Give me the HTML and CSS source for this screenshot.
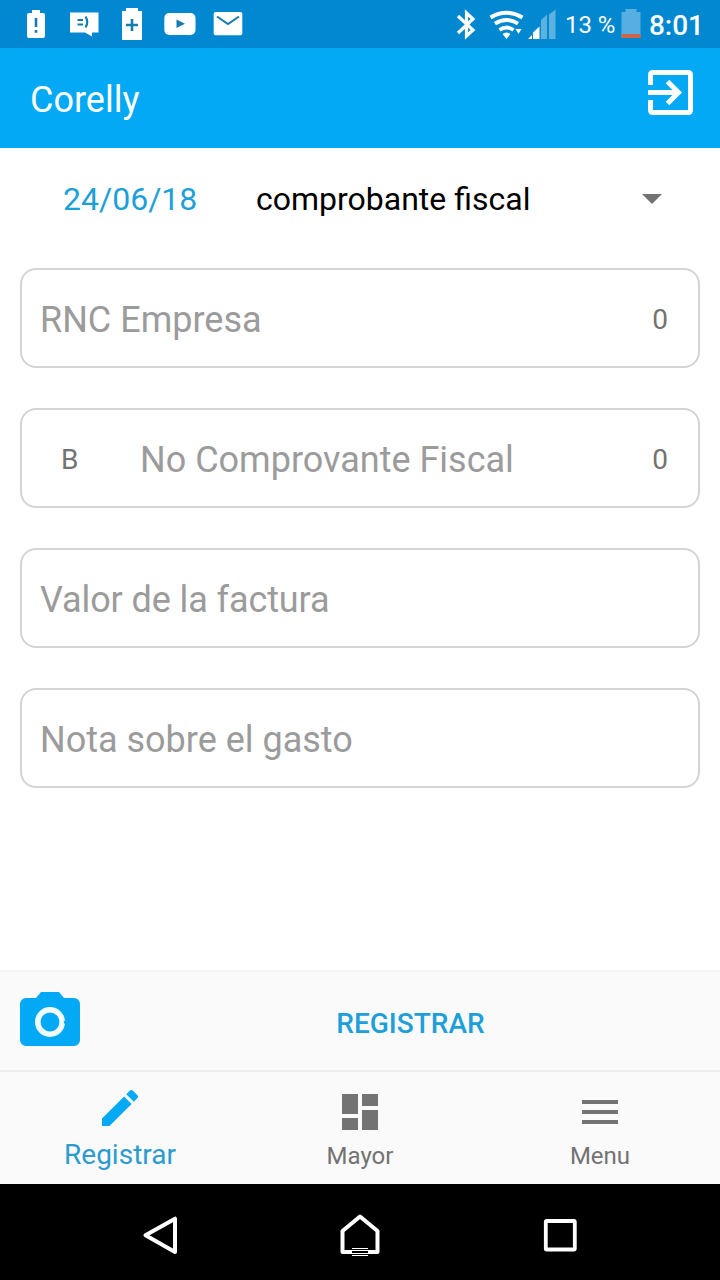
FILE: index.html
```html
<!DOCTYPE html>
<html lang="es">
<head>
<meta charset="utf-8">
<title>Corelly</title>
<link rel="stylesheet" href="styles.css">
</head>
<body>
<div class="screen">
  <div class="status">
    <div class="notifications">
      <svg class="cell" viewBox="0 0 48 48"><path fill="#fff" d="M20 10h8v3h3a2 2 0 0 1 2 2v21a2 2 0 0 1-2 2H17a2 2 0 0 1-2-2V15a2 2 0 0 1 2-2h3z"/><path stroke="#147cae" stroke-width="2.600" d="M24 18v9M24 30v2.800"/></svg>
      <svg class="cell" viewBox="0 0 48 48"><path fill="#fff" d="M10 12.500h28.500v20H32v4l-7-4H10z"/><path fill="none" stroke="#147cae" stroke-width="2.200" d="M17.500 20h5.500M17.500 24.500h5.500M25.500 16.500q3.500 5.500 0 11"/></svg>
      <svg class="cell" viewBox="0 0 48 48"><path fill="#fff" d="M18 8h12v3h4v29H14V11h4z"/><path stroke="#147cae" stroke-width="2.600" d="M18 25h12M24 19v12"/></svg>
      <svg class="cell" viewBox="0 0 48 48"><rect x="8.300" y="13" width="31.200" height="22" rx="5" fill="#fff"/><path fill="#147cae" d="M20.500 19.500v8.500l8.500-4.250z"/></svg>
      <svg class="cell" viewBox="0 0 48 48"><rect x="9.700" y="12" width="28.600" height="23.300" rx="2" fill="#fff"/><path fill="none" stroke="#147cae" stroke-width="2" d="M13 16.500l11 7.500 11-7.500"/></svg>
    </div>
    <div class="system">
      <svg class="radio" viewBox="456 0 102 48">
        <path fill="none" stroke="#fff" stroke-width="3.200" d="M458 16l15 14-6.500 6V13l6.500 6-15 14"/>
        <g fill="none" stroke="#fff" stroke-width="3.800"><path d="M490.500 17.500q16-9.500 32 0M495 23.700q11.500-7.500 23 0M499.500 30q7-5 14 0"/></g>
        <path fill="#fff" d="M502.500 34q4-3 8 0l-4 5zM515.500 29h6l-3 5z"/>
        <path fill="#5bb2e0" d="M541 20l6-5.500V39h-6zM549 14.500l6.500-5V39H549z"/>
        <path fill="#fff" d="M533 32.500l6.500-6V39H533zM528 39l4-4v4z"/>
      </svg>
      <span class="percent">13 %</span>
      <svg class="battery" viewBox="620 0 22 48"><path fill="#57aee0" d="M621.500 12h4V9h11v3h4v26h-19z"/><path fill="#cf634c" d="M621.500 34h19v4h-19z"/></svg>
      <span class="clock">8:01</span>
    </div>
  </div>
  <header class="appbar">
    <h1 class="title">Corelly</h1>
    <svg class="exit" viewBox="0 0 46 46"><path fill="none" stroke="#fff" stroke-width="5" d="M2.500 15V5q0-2.500 2.500-2.500H40q2.500 0 2.500 2.500V40q0 2.500-2.500 2.500H5q-2.500 0-2.500-2.500V30M0 22.500H30M19.500 11.500l11 11-11 11"/></svg>
  </header>
  <main class="form">
    <div class="options">
      <span class="date">24/06/18</span>
      <span class="kind">comprobante fiscal</span>
      <svg class="caret" viewBox="0 0 20 10"><path fill="#737373" d="M0 0h20L10 10z"/></svg>
    </div>
    <div class="field"><span class="hint">RNC Empresa</span><span class="count">0</span></div>
    <div class="field"><span class="prefix">B</span><span class="hint">No Comprovante Fiscal</span><span class="count">0</span></div>
    <div class="field"><span class="hint amount">Valor de la factura</span></div>
    <div class="field"><span class="hint">Nota sobre el gasto</span></div>
  </main>
  <div class="actions">
    <svg class="camera" viewBox="0 0 60 54"><path fill="#03a9f4" d="M21 0h18l5 6h10a6 6 0 0 1 6 6v36a6 6 0 0 1-6 6H6a6 6 0 0 1-6-6V12a6 6 0 0 1 6-6h10z"/><circle cx="30" cy="30" r="12.200" fill="none" stroke="#f1fcff" stroke-width="5.600"/><path fill="#03a9f4" d="M46 28l-2.500 1.500.7.700-.7.700 2.500 1.500z"/></svg>
    <span class="submit">REGISTRAR</span>
  </div>
  <nav class="tabs">
    <div class="tab active"><svg class="tabicon" viewBox="0 0 24 24"><path fill="currentColor" d="M3 17.250V21h3.750L17.810 9.940l-3.750-3.750zM20.710 7.040a1 1 0 0 0 0-1.410l-2.340-2.340a1 1 0 0 0-1.410 0l-1.830 1.830 3.750 3.750z"/></svg><span>Registrar</span></div>
    <div class="tab"><svg class="tabicon" viewBox="0 0 24 24"><path fill="currentColor" d="M3 13h8V3H3zM3 21h8v-6H3zM13 21h8V11h-8zM13 3v6h8V3z"/></svg><span>Mayor</span></div>
    <div class="tab"><svg class="tabicon" viewBox="0 0 24 24"><path fill="currentColor" d="M3 18h18v-2H3zM3 13h18v-2H3zM3 6v2h18V6z"/></svg><span>Menu</span></div>
  </nav>
  <div class="softkeys">
    <svg class="key" viewBox="140 1211 40 48"><path fill="none" stroke="#fff" stroke-width="4" stroke-linejoin="round" d="M175 1218.700V1252l-29.500-16.700z"/></svg>
    <svg class="key" viewBox="340 1211 40 48"><path fill="none" stroke="#fff" stroke-width="4" stroke-linejoin="round" d="M342.500 1252v-21l17.500-14.500 17.500 14.500v21z"/><path fill="#000" d="M352 1247h16v10h-16z"/><path stroke="#fff" d="M352 1248.500h16M352 1250.500h16M352 1253.500h16M352 1255.500h16"/></svg>
    <svg class="key" viewBox="540 1211 40 48"><rect x="545.800" y="1221" width="29" height="28.500" rx="1" fill="none" stroke="#fff" stroke-width="3.800"/></svg>
  </div>
</div>
</body>
</html>
```
FILE: styles.css
```css
* { box-sizing: border-box; }
body { margin: 0; font-family: Roboto, "Liberation Sans", sans-serif; background: #fff; }
svg { display: block; flex: none; }
span { white-space: nowrap; }
.screen { width: 720px; height: 1280px; display: flex; flex-direction: column; overflow: hidden; }

.status { height: 48px; flex: none; background: #0288d1; color: #fff; display: flex; justify-content: space-between; padding: 0 16px 0 12px; }
.notifications { display: flex; }
.cell { width: 48px; height: 48px; }
.system { display: flex; width: 248px; line-height: 51px; }
.radio { width: 102px; height: 48px; }
.percent { width: 62px; padding-left: 7px; font-size: 24px; letter-spacing: -0.1px; }
.battery { width: 22px; height: 48px; }
.clock { padding-left: 7px; font-size: 28px; font-weight: 500; }

.appbar { height: 100px; flex: none; background: #03a9f4; color: #fff; display: flex; justify-content: space-between; padding: 0 26px 0 30px; }
.title { margin: 0; font-size: 36px; font-weight: 400; line-height: 105px; }
.exit { width: 46px; height: 46px; margin-top: 22px; }

.form { flex: 1; display: flex; flex-direction: column; gap: 40px; padding: 0 20px; }
.options { height: 80px; display: flex; align-items: center; padding: 22px 38px 0 43px; line-height: 38px; font-size: 32px; }
.date { width: 193px; color: #1d9fda; }
.kind { flex: 1; color: #000; }
.caret { width: 20px; height: 10px; }
.field { height: 100px; border: 2px solid #d4d4d4; border-radius: 16px; display: flex; align-items: center; padding: 3px 30px 0 18px; }
.hint { flex: 1; font-size: 36px; color: #9b9b9b; }
.hint.amount { letter-spacing: -0.1px; }
.prefix { width: 100px; padding-left: 21px; font-size: 28px; color: #737373; }
.count { font-size: 28px; color: #737373; }

.actions { height: 102px; flex: none; background: #fafafa; border-top: 2px solid #f4f4f4; border-bottom: 2px solid #eee; display: flex; padding-left: 20px; }
.camera { width: 60px; height: 54px; margin-top: 20px; }
.submit { flex: 1; padding-left: 21px; text-align: center; font-size: 28px; font-weight: 500; line-height: 103px; color: #1d9fda; }

.tabs { height: 112px; flex: none; background: #fafafa; display: flex; }
.tab { flex: 1; display: flex; flex-direction: column; align-items: center; padding-top: 16px; color: #737373; font-size: 24px; line-height: 30px; gap: 5px; }
.tab.active { padding-top: 12px; gap: 6px; color: #03a9f4; font-size: 28px; line-height: 34px; }
.tab.active span { color: #2b9bd0; }
.tabicon { width: 48px; height: 48px; }

.softkeys { height: 96px; flex: none; background: #000; display: flex; justify-content: center; gap: 160px; padding-top: 27px; }
.key { width: 40px; height: 48px; }
```
